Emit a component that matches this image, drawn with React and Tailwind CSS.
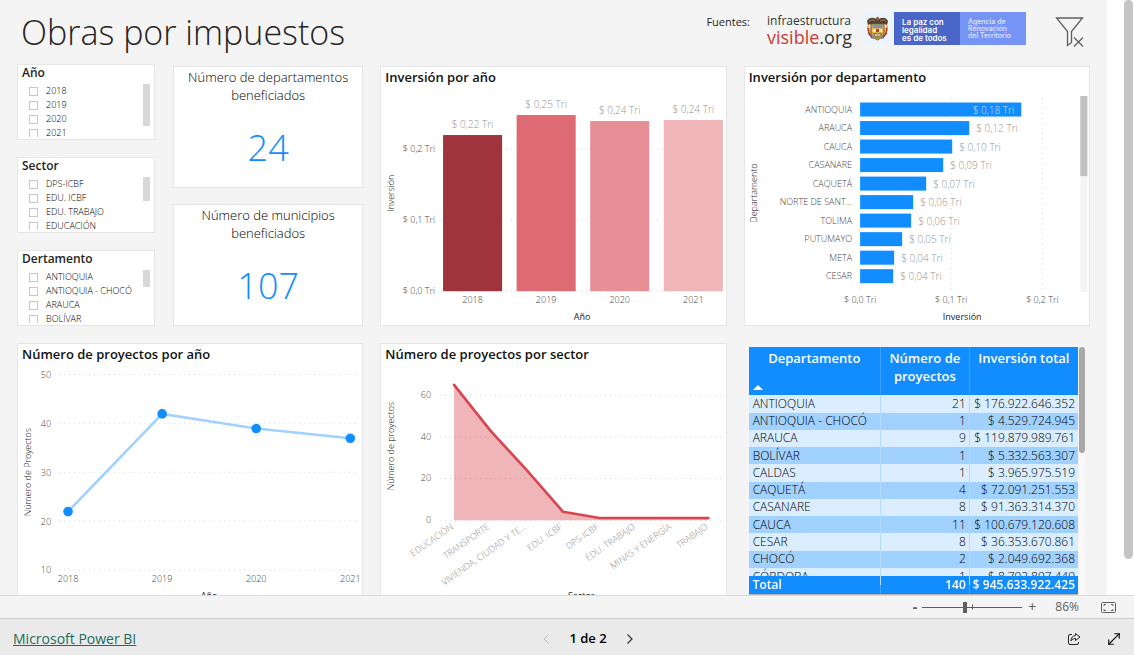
import { useState } from "react";
import { MoveDiagonal } from "lucide-react";

const slicers = [
  { title: "Año", items: ["2018", "2019", "2020", "2021"], thumb: "h-[42px]" },
  {
    title: "Sector",
    items: ["DPS-ICBF", "EDU. ICBF", "EDU. TRABAJO", "EDUCACIÓN"],
    thumb: "h-6",
  },
  {
    title: "Dertamento",
    items: ["ANTIOQUIA", "ANTIOQUIA - CHOCÓ", "ARAUCA", "BOLÍVAR"],
    thumb: "h-[17px]",
  },
];

const investmentByYear = [
  { year: "2018", label: "$ 0,22 Tri", top: 46, color: "#a0343d" },
  { year: "2019", label: "$ 0,25 Tri", top: 26, color: "#de6a73" },
  { year: "2020", label: "$ 0,24 Tri", top: 32, color: "#e68f96" },
  { year: "2021", label: "$ 0,24 Tri", top: 31, color: "#efb5b9" },
];

const investmentByDepartment = [
  { name: "ANTIOQUIA", label: "$ 0,18 Tri", width: 161 },
  { name: "ARAUCA", label: "$ 0,12 Tri", width: 109 },
  { name: "CAUCA", label: "$ 0,10 Tri", width: 92 },
  { name: "CASANARE", label: "$ 0,09 Tri", width: 83 },
  { name: "CAQUETÁ", label: "$ 0,07 Tri", width: 66 },
  { name: "NORTE DE SANT...", label: "$ 0,06 Tri", width: 53 },
  { name: "TOLIMA", label: "$ 0,06 Tri", width: 51 },
  { name: "PUTUMAYO", label: "$ 0,05 Tri", width: 42 },
  { name: "META", label: "$ 0,04 Tri", width: 34 },
  { name: "CESAR", label: "$ 0,04 Tri", width: 33 },
];

const projectsByYear = [
  { year: "2018", value: 22 },
  { year: "2019", value: 42 },
  { year: "2020", value: 39 },
  { year: "2021", value: 37 },
];

const projectsBySector = [
  { name: "EDUCACIÓN", value: 65 },
  { name: "TRANSPORTE", value: 43 },
  { name: "VIVIENDA, CIUDAD Y TE...", value: 24 },
  { name: "EDU. ICBF", value: 4 },
  { name: "DPS-ICBF", value: 1 },
  { name: "EDU. TRABAJO", value: 1 },
  { name: "MINAS Y ENERGÍA", value: 1 },
  { name: "TRABAJO", value: 1 },
];

const rows = [
  ["ANTIOQUIA", "21", "$ 176.922.646.352"],
  ["ANTIOQUIA - CHOCÓ", "1", "$ 4.529.724.945"],
  ["ARAUCA", "9", "$ 119.879.989.761"],
  ["BOLÍVAR", "1", "$ 5.332.563.307"],
  ["CALDAS", "1", "$ 3.965.975.519"],
  ["CAQUETÁ", "4", "$ 72.091.251.553"],
  ["CASANARE", "8", "$ 91.363.314.370"],
  ["CAUCA", "11", "$ 100.679.120.608"],
  ["CESAR", "8", "$ 36.353.670.861"],
  ["CHOCÓ", "2", "$ 2.049.692.368"],
  ["CÓRDOBA", "1", "$ 8.792.897.449"],
];

function Slicer({ title, items, thumb }) {
  return (
    <fieldset className="h-[76px] overflow-hidden bg-white border border-[#e6e6e6] pl-1 pr-1">
      <legend className="float-left w-full text-xs leading-4 font-semibold text-[#252423]">
        {title}
      </legend>
      <div className="clear-both flex justify-between pt-[3px]">
        <div className="h-[53px] overflow-hidden">
          {items.map((item) => (
            <label
              key={item}
              className="flex items-center gap-2 h-[14px] pl-[7px] text-[9px] font-light text-black whitespace-nowrap"
            >
              <input
                type="checkbox"
                className="appearance-none w-[9px] h-[9px] border border-[#c8c8c8] bg-white checked:bg-[#605e5c]"
              />
              {item}
            </label>
          ))}
        </div>
        <div className={`w-[7px] bg-[#d8d8d8] ${thumb}`} />
      </div>
    </fieldset>
  );
}

function NumberCard({ title, value }) {
  return (
    <section className="flex-1 flex flex-col bg-white border border-[#e6e6e6] px-3 text-center">
      <h2 className="pt-px text-[13px] leading-[18px] font-light text-black">
        {title}
      </h2>
      <p className="flex-1 pt-[14px] text-[36px] leading-[60px] font-light text-[#118dff]">
        {value}
      </p>
    </section>
  );
}

function ChartCard({ title, children }) {
  return (
    <section className="bg-white border border-[#e6e6e6]">
      <h2 className="h-[22px] pl-1 text-[13px] leading-5 font-semibold text-[#111111]">
        {title}
      </h2>
      {children}
    </section>
  );
}

function GridLine({ x1, x2, y1, y2 }) {
  return (
    <line
      x1={x1}
      x2={x2}
      y1={y1}
      y2={y2}
      stroke="#d6d6d6"
      strokeWidth="1"
      strokeDasharray="1 4"
    />
  );
}

function AxisTitle({ x, y, children }) {
  return (
    <text
      textAnchor="middle"
      fontSize="9"
      fill="#252423"
      transform={`translate(${x} ${y}) rotate(-90)`}
    >
      {children}
    </text>
  );
}

function YearBarChart() {
  return (
    <svg viewBox="0 0 344 236" className="block w-full font-light" fontSize="9">
      {["$ 0,2 Tri", "$ 0,1 Tri", "$ 0,0 Tri"].map((tick, i) => (
        <g key={tick}>
          <GridLine x1={60} x2={341} y1={60 + i * 71} y2={60 + i * 71} />
          <text x="54" y={63 + i * 71} textAnchor="end" fill="#484644">
            {tick}
          </text>
        </g>
      ))}
      {investmentByYear.map((bar, i) => {
        const x = 62 + i * 73.5;
        return (
          <g key={bar.year} textAnchor="middle">
            <rect x={x} y={bar.top} width="59" height={202 - bar.top} fill={bar.color} />
            <text x={x + 29.5} y={bar.top - 7} fill="#979593" fontSize="10">
              {bar.label}
            </text>
            <text x={x + 29.5} y="214" fill="#484644">
              {bar.year}
            </text>
          </g>
        );
      })}
      <text x="201" y="231" textAnchor="middle" fill="#252423" className="font-normal">
        Año
      </text>
      <AxisTitle x={13} y={104}>
        Inversión
      </AxisTitle>
    </svg>
  );
}

function DepartmentBarChart() {
  return (
    <svg viewBox="0 0 344 236" className="block w-full font-light" fontSize="9">
      {["$ 0,0 Tri", "$ 0,1 Tri", "$ 0,2 Tri"].map((tick, i) => (
        <g key={tick}>
          <GridLine x1={115 + i * 91} x2={115 + i * 91} y1={9} y2={203} />
          <text x={115 + i * 91} y="214" textAnchor="middle" fill="#484644">
            {tick}
          </text>
        </g>
      ))}
      {investmentByDepartment.map((bar, i) => {
        const y = 13.5 + i * 18.5;
        const inside = i === 0;
        return (
          <g key={bar.name}>
            <text x="107" y={y + 10} textAnchor="end" fill="#484644">
              {bar.name}
            </text>
            <rect x="115" y={y} width={bar.width} height="14" fill="#118dff" />
            <text
              x={115 + bar.width + (inside ? -7 : 7)}
              y={y + 11}
              textAnchor={inside ? "end" : "start"}
              fill={inside ? "#d8d6d4" : "#979593"}
              fontSize="10"
            >
              {bar.label}
            </text>
          </g>
        );
      })}
      <rect x="335" y="7" width="7" height="196" fill="#f4f4f4" />
      <rect x="335" y="7" width="7" height="80" fill="#c1c1c1" />
      <text x="217" y="231" textAnchor="middle" fill="#252423" className="font-normal">
        Inversión
      </text>
      <AxisTitle x={12} y={104}>
        Departamento
      </AxisTitle>
    </svg>
  );
}

function ProjectsLineChart() {
  const points = projectsByYear.map((d, i) => ({
    ...d,
    x: 50 + i * 94,
    y: 204 - (d.value - 10) * 4.88,
  }));

  return (
    <svg viewBox="0 0 344 236" className="block w-full font-light" fontSize="9">
      {[50, 40, 30, 20, 10].map((tick, i) => (
        <g key={tick}>
          <GridLine x1={41} x2={340} y1={8.5 + i * 48.8} y2={8.5 + i * 48.8} />
          <text x="33" y={12 + i * 48.8} textAnchor="end" fill="#484644">
            {tick}
          </text>
        </g>
      ))}
      <polyline
        points={points.map((p) => `${p.x},${p.y}`).join(" ")}
        fill="none"
        stroke="#a0d1ff"
        strokeWidth="2.6"
      />
      {points.map((p) => (
        <g key={p.year}>
          <circle cx={p.x} cy={p.y} r="4.8" fill="#118dff" />
          <text x={p.x} y="216" textAnchor="middle" fill="#484644">
            {p.year}
          </text>
        </g>
      ))}
      <text x="191" y="233" textAnchor="middle" fill="#252423" className="font-normal">
        Año
      </text>
      <AxisTitle x={13} y={106}>
        Número de Proyectos
      </AxisTitle>
    </svg>
  );
}

function SectorAreaChart() {
  const points = projectsBySector.map((d, i) => ({
    ...d,
    x: 73 + i * 36.3,
    y: 154 - d.value * 2.08,
  }));
  const line = points.map((p) => `${p.x},${p.y}`).join(" ");

  return (
    <svg viewBox="0 0 344 236" className="block w-full font-light" fontSize="9">
      {[60, 40, 20, 0].map((tick, i) => (
        <g key={tick}>
          <GridLine x1={59} x2={341} y1={29.5 + i * 41.5} y2={29.5 + i * 41.5} />
          <text x="50" y={32 + i * 41.5} textAnchor="end" fill="#484644">
            {tick}
          </text>
        </g>
      ))}
      <polygon points={`73,154 ${line} ${points[7].x},154`} fill="#d64550" fillOpacity="0.4" />
      <polyline
        points={line}
        fill="none"
        stroke="#d64550"
        strokeWidth="2.6"
        strokeLinecap="round"
        strokeLinejoin="round"
      />
      {points.map((p) => (
        <text
          key={p.name}
          textAnchor="end"
          fill="#8a8886"
          transform={`translate(${p.x} 162) rotate(-35)`}
        >
          {p.name}
        </text>
      ))}
      <text x="200" y="233" textAnchor="middle" fill="#252423" className="font-normal">
        Sector
      </text>
      <AxisTitle x={13} y={80}>
        Número de proyectos
      </AxisTitle>
    </svg>
  );
}

function DepartmentTable() {
  return (
    <div className="flex gap-px pt-1 pl-[5px] pr-[5px]">
      <div className="flex-1 h-[248px] overflow-hidden border-b border-[#b3b0ad]">
        <table className="w-full h-[256px] table-fixed text-xs leading-4 font-light text-black">
          <thead className="bg-[#118dff] text-white text-[13px] leading-[18px]">
            <tr className="h-12 align-top">
              <th className="w-[40%] pt-[2px] font-semibold border-r border-[#3aa1ff]">
                Departamento
                <svg viewBox="0 0 10 5" className="block w-[10px] h-[5px] mt-[18px] ml-1 fill-white">
                  <path d="M0 5 5 0l5 5z" />
                </svg>
              </th>
              <th className="w-[27%] pt-[2px] font-semibold border-r border-[#3aa1ff]">
                Número de proyectos
              </th>
              <th className="pt-[2px] font-semibold whitespace-nowrap">Inversión total</th>
            </tr>
          </thead>
          <tbody>
            {rows.map(([name, count, total]) => (
              <tr key={name} className="odd:bg-[#dbeeff] even:bg-[#a0d1ff]">
                <td className="p-0 pl-1 border-r border-[#b5dbff]">{name}</td>
                <td className="p-0 pr-[3px] text-right border-r border-[#b5dbff]">{count}</td>
                <td className="p-0 pr-[3px] text-right whitespace-nowrap">{total}</td>
              </tr>
            ))}
          </tbody>
          <tfoot className="sticky bottom-0 bg-[#118dff] text-white font-semibold">
            <tr className="h-[18px]">
              <td className="p-0 pl-1 border-r border-[#3aa1ff]">Total</td>
              <td className="p-0 pr-[3px] text-right border-r border-[#3aa1ff]">140</td>
              <td className="p-0 pr-[3px] text-right whitespace-nowrap">$ 945.633.922.425</td>
            </tr>
          </tfoot>
        </table>
      </div>
      <div className="w-[6px] bg-[#f9f9f9]">
        <div className="h-[106px] rounded-full bg-[#a8a8a8]" />
      </div>
    </div>
  );
}

function Emblem() {
  return (
    <svg viewBox="0 0 33 33" className="w-[33px] h-[33px] bg-[#eef4fc]">
      <path d="M6 9c2-4 6-4 9-2l1.500-2 1.500 2c3-2 7-2 9 2l-1 4-3-1-1 2H11l-1-2-3 1z" fill="#54402e" />
      <path d="M8 9.500c2-2 4-2 6 0M19 9.500c2-2 4-2 6 0" stroke="#a58a68" fill="none" />
      <circle cx="16.500" cy="6.500" r="1.800" fill="#8a6a48" />
      <path d="M7 12l-1 3 2 8 4-1zM26 12l1 3-2 8-4-1z" fill="#e8b92e" />
      <path d="M7 16l1 6 3 3M26 16l-1 6-3 3" stroke="#c0392b" strokeWidth="1.500" fill="none" />
      <path d="M8 21l3 5 2 0M25 21l-3 5-2 0" stroke="#2d4f9e" strokeWidth="1.200" fill="none" />
      <path d="M10 12h13v8c0 4-3 6-6.500 8-3.500-2-6.500-4-6.500-8z" fill="#d9b04c" stroke="#8c4a2a" />
      <path d="M11.500 12.500h10v3.500h-10z" fill="#7d93b4" />
      <path d="M11.500 17h10v3h-10z" fill="#efe2c0" />
      <path d="M15 17h3v3h-3z" fill="#c0392b" />
      <path d="M11.500 21h10c-.5 3-2.500 4.500-5 6-2.500-1.500-4.500-3-5-6z" fill="#8c8a4e" />
      <path d="M14 23h5" stroke="#f0f0f0" />
    </svg>
  );
}

function Header() {
  return (
    <header className="flex items-start justify-between h-16 pl-[21px] pr-[22px]">
      <h1 className="pt-[6px] text-[34px] leading-[52px] font-light text-[#252423] whitespace-nowrap">
        Obras por impuestos
      </h1>
      <div className="flex items-start">
        <span className="pt-[13px] pr-[17px] text-[11px] leading-[18px] text-[#252423]">
          Fuentes:
        </span>
        <div className="w-[94px] pt-3 text-[#333333]">
          <p className="text-xs leading-[17px] font-medium">infraestructura</p>
          <p className="text-[18px] leading-4">
            <span className="text-[#cb3a36]">visible</span>.org
          </p>
        </div>
        <div className="flex pt-3 font-['Inter'] font-medium text-white">
          <Emblem />
          <p className="w-[66px] h-[33px] pt-[6px] pl-2 bg-[#4a66c9] text-[8px] leading-[8px] font-semibold whitespace-nowrap">
            La paz con
            <br />
            legalidad
            <br />
            es de todos
          </p>
          <p className="w-[66px] h-[33px] pt-[6px] pl-2 bg-[#7694f6] text-[7px] leading-[7px] whitespace-nowrap text-[#dfe7ff]">
            Agencia de
            <br />
            Renovación
            <br />
            del Territorio
          </p>
        </div>
        <button aria-label="Borrar filtros" className="mt-4 ml-[29px]">
          <svg
            viewBox="0 0 30 32"
            className="block w-[30px] h-8"
            fill="none"
            stroke="#605e5c"
            strokeWidth="1.300"
          >
            <path d="M1.500 2h26L16.500 15.500v11l-4 3v-14z" />
            <path d="M19 21.500l9 9M28 21.500l-9 9" />
          </svg>
        </button>
      </div>
    </header>
  );
}

function ZoomBar() {
  const [zoom, setZoom] = useState(86);

  return (
    <div className="flex items-center justify-end h-[23px] shrink-0 pr-[18px] bg-[#f4f4f4] border-t border-[#dcdcdc] text-[#605e5c]">
      <button aria-label="Alejar" className="pr-[5px] text-sm leading-4 font-bold">
        -
      </button>
      <div className="relative flex items-center">
        <input
          type="range"
          aria-label="Zoom"
          min="10"
          max="190"
          value={zoom}
          onChange={(e) => setZoom(Number(e.target.value))}
          className="appearance-none w-[100px] h-px bg-[#605e5c] [&::-webkit-slider-thumb]:appearance-none [&::-webkit-slider-thumb]:w-1 [&::-webkit-slider-thumb]:h-[11px] [&::-webkit-slider-thumb]:bg-[#605e5c]"
        />
        <span className="absolute left-[50px] top-1/2 -translate-y-1/2 w-px h-[5px] bg-[#605e5c]" />
      </div>
      <button aria-label="Acercar" className="pl-[6px] text-sm leading-4">
        +
      </button>
      <span className="pl-[19px] pr-[22px] text-xs">{zoom}%</span>
      <button aria-label="Ajustar a la página">
        <svg viewBox="0 0 15 11" className="block w-[15px] h-[11px]" fill="none" stroke="#605e5c">
          <rect x=".5" y=".5" width="14" height="10" rx="1" />
          <path d="M5 2.500H3V4M10 2.500h2V4M5 8.500H3V7M10 8.500h2V7" />
        </svg>
      </button>
    </div>
  );
}

function Footer() {
  return (
    <footer className="grid grid-cols-3 items-center h-[37px] shrink-0 pt-[3px] pl-[13px] pr-[13px] bg-[#eaeaea] border-t border-[#c8c8c8]">
      <a href="#" className="text-sm text-[#1a6b62] underline">
        Microsoft Power BI
      </a>
      <div className="flex items-center justify-center gap-5 pl-[42px] text-[13px] font-semibold text-black">
        <button aria-label="Página anterior">
          <svg viewBox="0 0 6 10" className="block w-[6px] h-[10px]" fill="none" stroke="#bdbdbd">
            <path d="M5.500.5 1 5l4.500 4.500" />
          </svg>
        </button>
        <span>1 de 2</span>
        <button aria-label="Página siguiente">
          <svg viewBox="0 0 6 10" className="block w-[6px] h-[10px]" fill="none" stroke="#333333" strokeWidth="1.200">
            <path d="M.5.5 5 5 .5 9.500" />
          </svg>
        </button>
      </div>
      <div className="flex items-center justify-end gap-[26px]">
        <button aria-label="Compartir">
          <svg viewBox="0 0 14 14" className="block w-[14px] h-[14px]" fill="none" stroke="#252423">
            <path d="M5 2.500H3A1.500 1.500 0 0 0 1.500 4v7A1.500 1.500 0 0 0 3 12.500h7a1.500 1.500 0 0 0 1.500-1.500v-1" />
            <path d="M8.500 1.500 13 5 8.500 8.500v-2C6.500 6.500 5 7.200 4 9c0-3 1.500-5.300 4.500-5.500z" />
          </svg>
        </button>
        <button aria-label="Pantalla completa">
          <MoveDiagonal size={18} strokeWidth={1.5} className="text-[#111111] -m-[2px]" />
        </button>
      </div>
    </footer>
  );
}

function App() {
  return (
    <div className="flex flex-col h-screen overflow-hidden bg-white font-['Open_Sans','Noto_Sans',sans-serif]">
      <div className="flex flex-1 min-h-0">
        <main className="flex-1 overflow-hidden bg-[#f4f4f4]">
          <Header />
          <div className="grid grid-cols-3 gap-[17px] px-[17px]">
            <div className="flex gap-[18px]">
              <div className="flex flex-col gap-[17px] w-[138px]">
                {slicers.map((slicer) => (
                  <Slicer key={slicer.title} {...slicer} />
                ))}
              </div>
              <div className="flex flex-col flex-1 gap-4 pt-[2px]">
                <NumberCard title="Número de departamentos beneficiados" value="24" />
                <NumberCard title="Número de municipios beneficiados" value="107" />
              </div>
            </div>
            <div className="pt-[2px]">
              <ChartCard title="Inversión por año">
                <YearBarChart />
              </ChartCard>
            </div>
            <div className="pt-[2px]">
              <ChartCard title="Inversión por departamento">
                <DepartmentBarChart />
              </ChartCard>
            </div>
            <ChartCard title="Número de proyectos por año">
              <ProjectsLineChart />
            </ChartCard>
            <ChartCard title="Número de proyectos por sector">
              <SectorAreaChart />
            </ChartCard>
            <DepartmentTable />
          </div>
        </main>
        <div className="w-[27px] pl-[17px] pr-px">
          <div className="h-[94%] rounded-full bg-[#c5c5c5]" />
        </div>
      </div>
      <ZoomBar />
      <Footer />
    </div>
  );
}

export default App;
